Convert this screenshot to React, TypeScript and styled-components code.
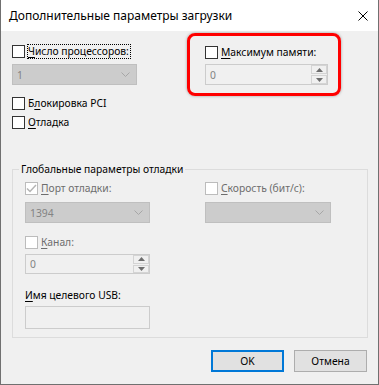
import styled, { createGlobalStyle } from 'styled-components'

const GlobalStyle = createGlobalStyle`
  html, body {
    margin: 0;
    padding: 0;
    background: #fff;
  }
  * {
    box-sizing: border-box;
  }
`

const Window = styled.div`
  width: 379px;
  height: 385px;
  display: flex;
  flex-direction: column;
  background: #f0f0f0;
  border: 1px solid #707070;
  border-top: none;
  font-family: 'Noto Sans', 'Liberation Sans', sans-serif;
  font-size: 10.3px;
  color: #000;
`

const TitleBar = styled.div`
  height: 31px;
  flex-shrink: 0;
  display: flex;
  align-items: center;
  padding-left: 8px;
  background: #fff;
  font-size: 12px;

  svg {
    margin-left: auto;
    margin-right: 10px;
  }
`

const Body = styled.div`
  flex: 1;
  display: flex;
  flex-direction: column;
  padding: 2px 11px 0 11px;
`

const TopRow = styled.div`
  display: flex;
  align-items: flex-start;
`

const LeftCol = styled.div`
  width: 175px;
  margin-top: 11px;
  display: flex;
  flex-direction: column;
`

const Highlight = styled.div`
  width: 154px;
  display: flex;
  flex-direction: column;
  padding: 9px 10px 8px 15px;
  border: 3px solid #ff0000;
  border-radius: 8px;
  box-shadow: 0 0 3px rgba(0, 0, 0, 0.35);
`

const Row = styled.div<{ $gap?: number }>`
  display: flex;
  align-items: center;
  height: 15px;
  gap: 2px;
  margin-top: ${(p) => p.$gap ?? 0}px;
`

const Box = styled.span<{ $disabled?: boolean }>`
  width: 13px;
  height: 13px;
  flex-shrink: 0;
  display: flex;
  align-items: center;
  justify-content: center;
  background: #fff;
  border: 1px solid ${(p) => (p.$disabled ? '#bcbcbc' : '#333')};
`

const Label = styled.span<{ $disabled?: boolean; $focus?: boolean }>`
  line-height: 13px;
  padding: 0 1px 0 0;
  white-space: nowrap;
  color: ${(p) => (p.$disabled ? '#6d6d6d' : '#000')};
  border: 1px dotted ${(p) => (p.$focus ? '#000' : 'transparent')};

  u {
    text-underline-offset: 2px;
  }
`

const Combo = styled.div<{ $w: number; $gap?: number }>`
  width: ${(p) => p.$w}px;
  height: 21px;
  margin-top: ${(p) => p.$gap ?? 0}px;
  display: flex;
  align-items: center;
  padding: 0 6px 0 4px;
  background: #cccccc;
  border: 1px solid #bfbfbf;
  color: #838383;

  svg {
    margin-left: auto;
  }
`

const Spin = styled.div<{ $w: number; $h: number; $gap?: number }>`
  width: ${(p) => p.$w}px;
  height: ${(p) => p.$h}px;
  margin-top: ${(p) => p.$gap ?? 0}px;
  display: flex;
  align-items: stretch;
  background: #f0f0f0;
  border: 1px solid #cccccc;
  color: #838383;
`

const SpinValue = styled.span`
  flex: 1;
  display: flex;
  align-items: center;
  padding-left: 4px;
`

const SpinButtons = styled.div`
  width: 16px;
  display: flex;
  flex-direction: column;
  gap: 1px;
`

const SpinButton = styled.span`
  flex: 1;
  display: flex;
  align-items: center;
  justify-content: center;
  border: 1px solid #d4d4d4;
  background: #f0f0f0;
`

const TextField = styled.div<{ $gap?: number }>`
  width: 125px;
  height: 23px;
  margin-top: ${(p) => p.$gap ?? 0}px;
  background: #f0f0f0;
  border: 1px solid #cccccc;
`

const Group = styled.fieldset`
  width: 356px;
  margin: 32px 0 0 0;
  padding: 0;
  min-width: 0;
  border: 1px solid #dcdcdc;
`

const Legend = styled.legend`
  margin-left: 6px;
  padding: 0 2px;
  line-height: 15px;
`

const GroupGrid = styled.div`
  display: grid;
  grid-template-columns: 180px 1fr;
  padding: 4px 12px 8px 12px;
`

const GroupCol = styled.div`
  display: flex;
  flex-direction: column;
`

const PlainLabel = styled.div<{ $gap?: number }>`
  height: 15px;
  line-height: 15px;
  margin-top: ${(p) => p.$gap ?? 0}px;
  white-space: nowrap;

  u {
    text-underline-offset: 2px;
  }
`

const Footer = styled.div`
  display: flex;
  justify-content: flex-end;
  gap: 10px;
  margin-top: 12px;
`

const Button = styled.button<{ $primary?: boolean }>`
  width: 73px;
  height: 22px;
  padding: 0;
  font-family: inherit;
  font-size: inherit;
  color: #000;
  background: #e1e1e1;
  border: ${(p) => (p.$primary ? '2px solid #0078d7' : '1px solid #adadad')};
`

const Chevron = () => (
  <svg width="9" height="5" viewBox="0 0 9 5" aria-hidden="true">
    <polyline points="0.5,0.5 4.5,4.5 8.5,0.5" fill="none" stroke="#a6a6a6" strokeWidth="1" />
  </svg>
)

const Arrow = ({ down }: { down?: boolean }) => (
  <svg width="7" height="4" viewBox="0 0 7 4" aria-hidden="true">
    <polygon points={down ? '0,0 7,0 3.5,4' : '3.5,0 7,4 0,4'} fill="#6d6d6d" />
  </svg>
)

const SpinBox = ({ w, h, gap }: { w: number; h: number; gap?: number }) => (
  <Spin $w={w} $h={h} $gap={gap}>
    <SpinValue>0</SpinValue>
    <SpinButtons>
      <SpinButton>
        <Arrow />
      </SpinButton>
      <SpinButton>
        <Arrow down />
      </SpinButton>
    </SpinButtons>
  </Spin>
)

const Check = ({ disabled, checked }: { disabled?: boolean; checked?: boolean }) => (
  <Box $disabled={disabled}>
    {checked && (
      <svg width="11" height="9" viewBox="0 0 11 9" aria-hidden="true">
        <polyline points="1,4.5 4,7.5 10,1" fill="none" stroke="#b4b4b4" strokeWidth="1.5" />
      </svg>
    )}
  </Box>
)

const App = () => (
  <>
    <GlobalStyle />
    <Window>
      <TitleBar>
        Дополнительные параметры загрузки
        <svg width="10" height="10" viewBox="0 0 10 10" aria-hidden="true">
          <path d="M0.5 0.5 L9.5 9.5 M9.5 0.5 L0.5 9.5" stroke="#000" strokeWidth="1" />
        </svg>
      </TitleBar>
      <Body>
        <TopRow>
          <LeftCol>
            <Row>
              <Check />
              <Label $focus>
                <u>Ч</u>исло процессоров:
              </Label>
            </Row>
            <Combo $w={125} $gap={5}>
              1
              <Chevron />
            </Combo>
            <Row $gap={11}>
              <Check />
              <Label>
                Б<u>л</u>окировка PCI
              </Label>
            </Row>
            <Row $gap={4}>
              <Check />
              <Label>
                <u>О</u>тладка
              </Label>
            </Row>
          </LeftCol>
          <Highlight>
            <Row>
              <Check />
              <Label>
                <u>М</u>аксимум памяти:
              </Label>
            </Row>
            <SpinBox w={123} h={21} gap={4} />
          </Highlight>
        </TopRow>

        <Group>
          <Legend>Глобальные параметры отладки</Legend>
          <GroupGrid>
            <GroupCol>
              <Row>
                <Check disabled checked />
                <Label $disabled>
                  <u>П</u>орт отладки:
                </Label>
              </Row>
              <Combo $w={125} $gap={6}>
                1394
                <Chevron />
              </Combo>
              <Row $gap={12}>
                <Check disabled />
                <Label $disabled>
                  <u>К</u>анал:
                </Label>
              </Row>
              <SpinBox w={125} h={20} gap={4} />
              <PlainLabel $gap={14}>
                <u>И</u>мя целевого USB:
              </PlainLabel>
              <TextField $gap={3} />
            </GroupCol>
            <GroupCol>
              <Row>
                <Check disabled />
                <Label $disabled>
                  <u>С</u>корость (бит/с):
                </Label>
              </Row>
              <Combo $w={126} $gap={6}>
                <Chevron />
              </Combo>
            </GroupCol>
          </GroupGrid>
        </Group>

        <Footer>
          <Button $primary>OK</Button>
          <Button>Отмена</Button>
        </Footer>
      </Body>
    </Window>
  </>
)

export default App
